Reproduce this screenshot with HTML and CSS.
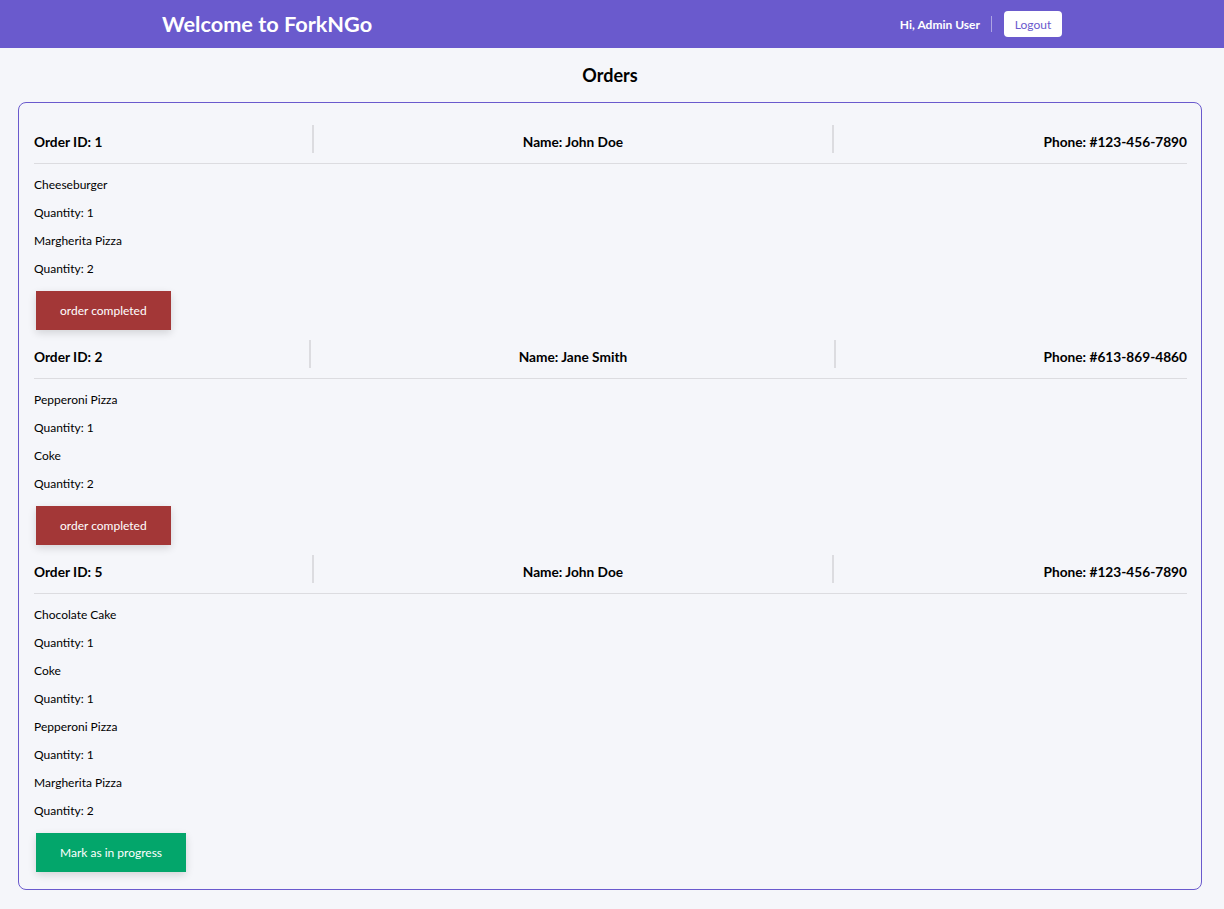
FILE: index.html
```html
<!DOCTYPE html>
<html lang="en">
<head>
<meta charset="utf-8">
<title>ForkNGo - Orders</title>
<link rel="stylesheet" href="styles.css">
</head>
<body>
<header class="topbar">
  <div class="topbar-inner">
    <h1 class="brand">Welcome to ForkNGo</h1>
    <div class="user-area">
      <span class="greeting">Hi, Admin User</span>
      <span class="divider"></span>
      <button class="logout">Logout</button>
    </div>
  </div>
</header>
<main class="page">
  <h2 class="page-title">Orders</h2>
  <section class="orders-card">
    <div class="order">
      <div class="order-head">
        <div class="col col-id">Order ID: 1</div>
        <div class="col col-name">Name: John Doe</div>
        <div class="col col-phone">Phone: #123-456-7890</div>
      </div>
      <div class="rule"></div>
      <ul class="items">
        <li>Cheeseburger</li>
        <li>Quantity: 1</li>
        <li>Margherita Pizza</li>
        <li>Quantity: 2</li>
      </ul>
      <button class="btn btn-red">order completed</button>
    </div>
    <div class="order">
      <div class="order-head">
        <div class="col col-id">Order ID: 2</div>
        <div class="col col-name">Name: Jane Smith</div>
        <div class="col col-phone">Phone: #613-869-4860</div>
      </div>
      <div class="rule"></div>
      <ul class="items">
        <li>Pepperoni Pizza</li>
        <li>Quantity: 1</li>
        <li>Coke</li>
        <li>Quantity: 2</li>
      </ul>
      <button class="btn btn-red">order completed</button>
    </div>
    <div class="order">
      <div class="order-head">
        <div class="col col-id">Order ID: 5</div>
        <div class="col col-name">Name: John Doe</div>
        <div class="col col-phone">Phone: #123-456-7890</div>
      </div>
      <div class="rule"></div>
      <ul class="items">
        <li>Chocolate Cake</li>
        <li>Quantity: 1</li>
        <li>Coke</li>
        <li>Quantity: 1</li>
        <li>Pepperoni Pizza</li>
        <li>Quantity: 1</li>
        <li>Margherita Pizza</li>
        <li>Quantity: 2</li>
      </ul>
      <button class="btn btn-green">Mark as in progress</button>
    </div>
  </section>
</main>
</body>
</html>
```
FILE: styles.css
```css
* { box-sizing: border-box; }
html, body {
  margin: 0;
  padding: 0;
  background: #f5f6fa;
  font-family: Lato, "Noto Sans", sans-serif;
  color: #000;
}
.topbar {
  background: #6a5acd;
  height: 48px;
}
.topbar-inner {
  width: 900px;
  margin: 0 auto;
  height: 48px;
  display: flex;
  align-items: center;
  justify-content: space-between;
}
.brand {
  margin: 0;
  color: #fff;
  font-size: 21.7px;
  font-weight: 700;
}
.user-area {
  display: flex;
  align-items: center;
}
.greeting {
  color: #fff;
  font-size: 12px;
  font-weight: 700;
}
.divider {
  width: 1px;
  height: 16px;
  background: rgba(255,255,255,0.45);
  margin: 0 12px 0 11px;
}
.logout {
  background: #fff;
  color: #6a5acd;
  border: none;
  border-radius: 4px;
  height: 26px;
  width: 58px;
  font-family: inherit;
  font-size: 12px;
  padding: 0;
}
.page {
  padding: 0 22px 20px 18px;
}
.page-title {
  margin: 0;
  height: 54px;
  line-height: 54px;
  text-align: center;
  font-size: 18px;
  font-weight: 700;
}
.orders-card {
  border: 1px solid #6a5acd;
  border-radius: 8px;
  padding: 12px 14px 17px 15px;
}
.order {
  padding-top: 10px;
}
.order-head {
  display: flex;
  height: 28px;
}
.col {
  flex: 1 1 auto;
  font-size: 13.7px;
  font-weight: 700;
  line-height: 20px;
  padding-top: 7px;
  white-space: nowrap;
}
.col-name {
  flex-grow: 2;
  text-align: center;
  border-left: 2px solid #dcdce0;
  border-right: 2px solid #dcdce0;
}
.col-phone {
  text-align: right;
}
.rule {
  height: 1px;
  background: #dcdce0;
  margin-top: 10px;
}
.items {
  list-style: none;
  margin: 7px 0 0;
  padding: 0;
}
.items li {
  font-size: 12px;
  line-height: 28px;
}
.btn {
  display: block;
  margin: 8px 2px 0;
  height: 39px;
  border: none;
  color: #fff;
  font-family: inherit;
  font-size: 12px;
  padding: 0 24px;
  box-shadow: 0 3px 8px rgba(0,0,0,0.14);
}
.btn-red { background: #a33737; }
.btn-green { background: #03a66b; }
```
